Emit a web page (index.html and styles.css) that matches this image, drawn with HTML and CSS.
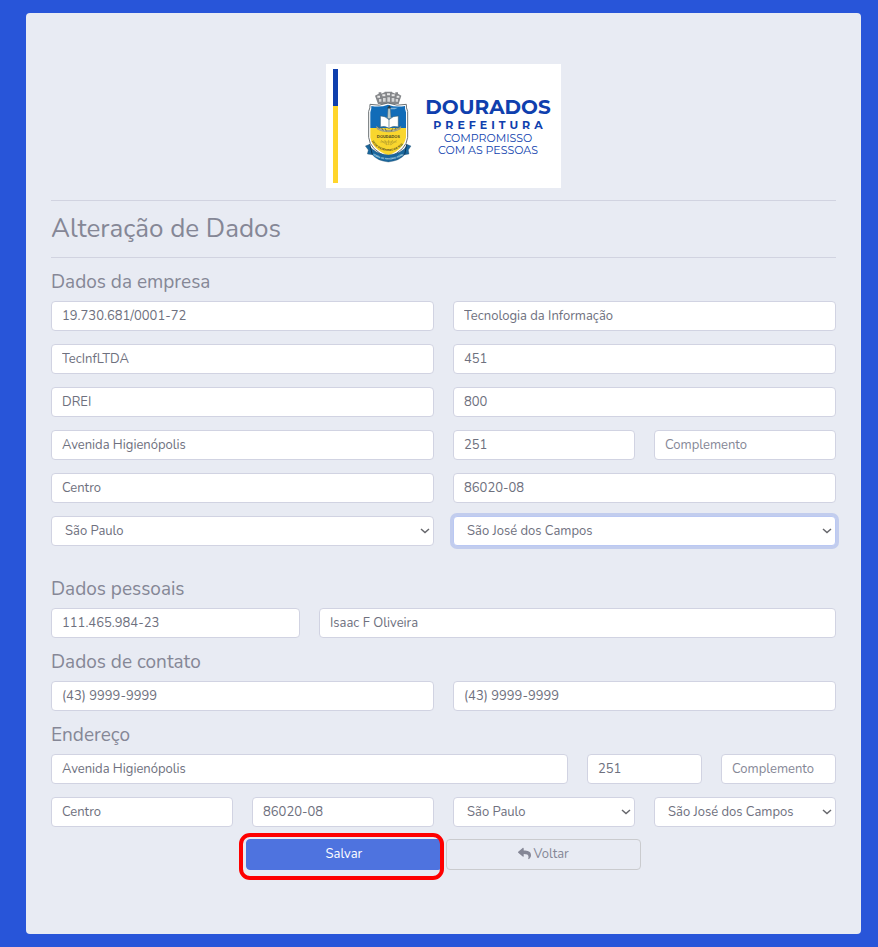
FILE: index.html
```html
<!DOCTYPE html>
<html lang="pt-BR">
<head>
  <meta charset="UTF-8" />
  <meta name="viewport" content="width=device-width, initial-scale=1.0"/>
  <title>Alteração de Dados</title>
  <link rel="stylesheet" href="styles.css">
</head>
<body>
  <main class="card">
    <svg class="logo" viewBox="0 0 235 124" role="img" aria-label="Prefeitura de Dourados">
      <rect width="235" height="124" fill="#fff"/>
      <rect x="7" y="5" width="5" height="37" fill="#0f3fae"/>
      <rect x="7" y="42" width="5" height="77" fill="#ffd52b"/>

      <!-- crest, drawn at three times its size -->
      <g transform="translate(-6 -6) scale(0.333333)">
        <!-- mural crown -->
        <path d="M165 113l11-6v-4h8v4l10-4v-2h22v2l10 4v-4h8v4l10 6-8 25h-62z" fill="#85878a"/>
        <path d="M172 113h8v6h-8zM187 109h9v6h-9zM201 106h9v6h-9zM215 109h9v6h-9zM230 113h8v6h-8z" fill="#e8e8e8"/>
        <path d="M177 123h7v8h-7zM189 120h8v11h-8zM202 118h8v13h-8zM215 120h8v11h-8zM227 123h7v8h-7z" fill="#d5d6d7"/>
        <!-- shield -->
        <path d="M150 139Q178 146 204 135Q231 146 259 139Q258 150 263 160V238Q260 276 205 298Q149 276 146 238V160Q151 150 150 139z" fill="#fff" stroke="#6b7174" stroke-width="3"/>
        <path d="M154 144Q182 149 204 140Q227 149 255 144Q254 154 258 163V210H151V163Q155 154 154 144z" fill="#116cb8"/>
        <path d="M151 210H258V238Q252 274 205 292Q156 274 151 238z" fill="#f9d62e"/>
        <!-- lamp and open book -->
        <path d="M202 182l2-31h7l2 31z" fill="#b9c8c5" stroke="#334a55"/>
        <path d="M201 151h13l-6-9z" fill="#2e3e43"/>
        <path d="M212 149l22 0-10 5h-12z" fill="#85b4d6"/>
        <path d="M181 174Q196 173 207 185Q218 173 235 174V207Q218 202 207 211Q195 202 181 207z" fill="#fff" stroke="#315d79" stroke-width="2"/>
        <path d="M207 185v26" stroke="#456675" stroke-width="2"/>
        <!-- laurel -->
        <path d="M168 204q17 11 38 12q22-1 38-12l-3 10q-14 9-35 9t-35-9z" fill="#a3a07c"/>
        <path d="M174 206l8 9M184 209l7 9M195 211l4 9M239 206l-8 9M229 209l-7 9M218 211l-4 9" stroke="#4c573f" stroke-width="2"/>
        <path d="M178 213l6 2M190 216l6 2M218 218l7-2M230 215l6-3" stroke="#ded7a3" stroke-width="2"/>
        <text class="crest-name" x="205" y="241">DOURADOS</text>
        <path d="M183 247l18 14M194 246l8 15M206 246v15M218 246l-8 15M230 247l-18 14M181 252h49" fill="none" stroke="#b29b2d" stroke-width="2"/>
        <path id="dateArc" d="M155 249Q170 276 205 279Q241 276 257 248" fill="none"/>
        <text class="crest-date"><textPath href="#dateArc">20 DE DEZEMBRO DE 1935</textPath></text>
        <!-- ribbon -->
        <path d="M149 264Q164 287 205 291Q246 287 260 264L260 259L273 264L265 276L267 288L254 290Q239 308 205 312Q171 308 157 290L142 288L145 276L136 264L149 259z" fill="#1a669c" stroke="#284f69"/>
        <path d="M149 259l8 31M260 259l-6 31" stroke="#0b3557" stroke-width="3"/>
        <path id="ribbonArc" d="M158 290Q178 304 205 305Q234 303 254 288" fill="none"/>
        <text class="crest-motto"><textPath href="#ribbonArc">TERRA DE ANTONIO JOÃO</textPath></text>
      </g>

      <text class="logo-city" x="162" y="50">DOURADOS</text>
      <text class="logo-office" x="164" y="65">PREFEITURA</text>
      <text class="logo-slogan" x="162" y="78">COMPROMISSO</text>
      <text class="logo-slogan" x="162" y="90">COM AS PESSOAS</text>
    </svg>

    <hr>
    <h1>Alteração de Dados</h1>
    <hr>

    <form>
      <section class="company">
        <h2>Dados da empresa</h2>
        <div class="row">
          <input class="col-6" type="text" aria-label="CNPJ" value="19.730.681/0001-72">
          <input class="col-6" type="text" aria-label="Ramo de atividade" value="Tecnologia da Informação">
          <input class="col-6" type="text" aria-label="Razão social" value="TecInfLTDA">
          <input class="col-6" type="text" aria-label="Inscrição municipal" value="451">
          <input class="col-6" type="text" aria-label="Nome fantasia" value="DREI">
          <input class="col-6" type="text" aria-label="Inscrição estadual" value="800">
          <input class="col-6" type="text" aria-label="Logradouro da empresa" value="Avenida Higienópolis">
          <input class="col-3" type="text" aria-label="Número da empresa" value="251">
          <input class="col-3" type="text" aria-label="Complemento da empresa" placeholder="Complemento">
          <input class="col-6" type="text" aria-label="Bairro da empresa" value="Centro">
          <input class="col-6" type="text" aria-label="CEP da empresa" value="86020-08">
          <div class="select col-6">
            <select aria-label="Estado da empresa"><option>São Paulo</option></select>
            <svg viewBox="0 0 20 12"><path d="M2 2l8 7 8-7"/></svg>
          </div>
          <div class="select col-6">
            <select aria-label="Cidade da empresa" autofocus><option>São José dos Campos</option></select>
            <svg viewBox="0 0 20 12"><path d="M2 2l8 7 8-7"/></svg>
          </div>
        </div>
      </section>

      <section>
        <h2>Dados pessoais</h2>
        <div class="row">
          <input class="col-4" type="text" aria-label="CPF" value="111.465.984-23">
          <input class="col-8" type="text" aria-label="Nome" value="Isaac F Oliveira">
        </div>
      </section>

      <section>
        <h2>Dados de contato</h2>
        <div class="row">
          <input class="col-6" type="tel" aria-label="Telefone" value="(43) 9999-9999">
          <input class="col-6" type="tel" aria-label="Celular" value="(43) 9999-9999">
        </div>
      </section>

      <section>
        <h2>Endereço</h2>
        <div class="row">
          <input class="col-8" type="text" aria-label="Logradouro" value="Avenida Higienópolis">
          <input class="col-2" type="text" aria-label="Número" value="251">
          <input class="col-2" type="text" aria-label="Complemento" placeholder="Complemento">
          <input class="col-3" type="text" aria-label="Bairro" value="Centro">
          <input class="col-3" type="text" aria-label="CEP" value="86020-08">
          <div class="select col-3">
            <select aria-label="Estado"><option>São Paulo</option></select>
            <svg viewBox="0 0 20 12"><path d="M2 2l8 7 8-7"/></svg>
          </div>
          <div class="select col-3">
            <select aria-label="Cidade"><option>São José dos Campos</option></select>
            <svg viewBox="0 0 20 12"><path d="M2 2l8 7 8-7"/></svg>
          </div>
        </div>
      </section>

      <div class="actions">
        <button type="submit" class="btn btn-save">Salvar</button>
        <button type="button" class="btn btn-back">
          <svg viewBox="0 0 512 512"><path d="M8.3 189.8L184.3 37.9C199.7 24.5 224 35.3 224 56v80.1c160.6 1.8 288 34 288 186.3 0 61.4-39.6 122.3-83.3 154.1-13.7 9.9-33.1-2.5-28.1-18.6C446 312.8 379.1 274.2 224 272v88c0 20.7-24.3 31.5-39.7 18.2l-176-152c-11.1-9.6-11.1-26.8 0-36.4z"/></svg>
          Voltar
        </button>
      </div>
    </form>
  </main>
</body>
</html>
```

FILE: styles.css
```css
* {
  box-sizing: border-box;
}

body {
  margin: 0;
  padding: 13px 17px 13px 26px;
  background: #2855d9;
  color: #858796;
  font-family: 'Nunito', 'Lato', sans-serif;
  font-size: 13px;
}

.card {
  padding: 51px 25px 64px;
  background: #e8ebf3;
  border-radius: 4px;
}

.logo {
  display: block;
  width: 235px;
  height: 124px;
  margin: 0 auto;
  fill: #0f3fae;
  font-family: 'Montserrat', 'Inter', sans-serif;
  text-anchor: middle;
}

.logo-city {
  font-size: 20px;
  font-weight: 700;
}

.logo-office {
  font-size: 11px;
  font-weight: 700;
  letter-spacing: 4px;
}

.logo-slogan {
  font-size: 11px;
}

.crest-name {
  font-size: 11px;
  font-weight: 700;
  fill: #4e4920;
}

.crest-date {
  font-size: 8px;
  font-weight: 700;
  fill: #4e4920;
  text-anchor: start;
}

.crest-motto {
  font-size: 7px;
  font-weight: 700;
  fill: #c8e3f2;
  text-anchor: start;
}

hr {
  height: 1px;
  margin: 12px 0;
  border: 0;
  background: #d1d3e0;
}

h1,
h2 {
  margin: 0;
  font-weight: 400;
}

h1 {
  font-size: 26px;
  line-height: 32px;
}

h2 {
  margin-bottom: 7px;
  font-size: 19px;
  line-height: 24px;
}

section {
  margin-bottom: 12px;
}

.company {
  margin-bottom: 31px;
}

.row {
  display: grid;
  grid-template-columns: repeat(12, 1fr);
  gap: 13px 19px;
}

.col-2 {
  grid-column: span 2;
}

.col-3 {
  grid-column: span 3;
}

.col-4 {
  grid-column: span 4;
}

.col-6 {
  grid-column: span 6;
}

.col-8 {
  grid-column: span 8;
}

input,
select {
  width: 100%;
  min-width: 0;
  height: 30px;
  padding: 0 10px 1px;
  border: 1px solid #d1d3e2;
  border-radius: 4px;
  background: #fff;
  color: #6e707e;
  font-family: inherit;
  font-size: 13px;
}

input::placeholder {
  color: #858796;
}

.select {
  position: relative;
}

select {
  appearance: none;
  display: block;
  padding-left: 13px;
}

select:focus {
  border-color: #bac8f3;
  outline: 0;
  box-shadow: 0 0 0 3px rgba(78, 115, 223, 0.25);
}

.select svg {
  position: absolute;
  top: 12px;
  right: 4px;
  width: 10px;
  height: 6px;
  fill: none;
  stroke: #66676c;
  stroke-width: 3;
  pointer-events: none;
}

.actions {
  display: flex;
  justify-content: center;
  gap: 4px;
}

.btn {
  display: flex;
  justify-content: center;
  align-items: center;
  gap: 3px;
  width: calc(25% - 1px);
  height: 31px;
  padding: 0 10px 2px;
  border: 1px solid #cacbce;
  border-radius: 4px;
  background: transparent;
  color: #858796;
  font-family: inherit;
  font-size: 13px;
  cursor: pointer;
}

.btn svg {
  width: 13px;
  height: 13px;
  fill: currentColor;
}

.btn-save {
  position: relative;
  border-color: #4e73df;
  background: #4e73df;
  color: #fff;
}

/* red frame around the main action */
.btn-save::after {
  content: "";
  position: absolute;
  inset: -7px -3px -11px -8px;
  border: 4px solid #fe0000;
  border-radius: 11px;
}
```
